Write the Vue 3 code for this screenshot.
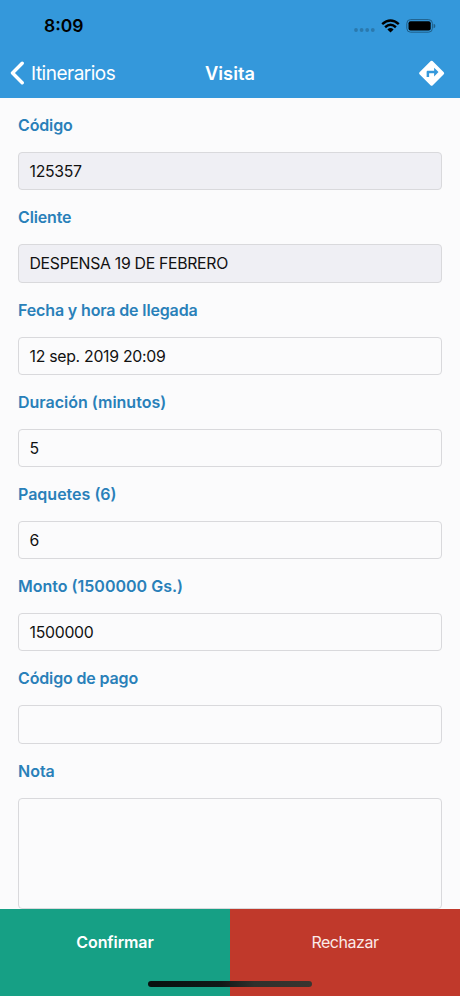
<script setup>
import { ref } from 'vue'

const fields = ref([
  { label: 'Código', value: '125357', disabled: true },
  { label: 'Cliente', value: 'DESPENSA 19 DE FEBRERO', disabled: true },
  { label: 'Fecha y hora de llegada', value: '12 sep. 2019 20:09' },
  { label: 'Duración (minutos)', value: '5', wide: true },
  { label: 'Paquetes (6)', value: '6', wide: true },
  { label: 'Monto (1500000 Gs.)', value: '1500000', wide: true },
  { label: 'Código de pago', value: '' }
])
</script>

<template>
  <div class="screen">
    <header class="header">
      <div class="status">
        <span class="time">8:09</span>
        <div class="indicators">
          <svg class="dots" width="22" height="6" viewBox="0 0 22 6">
            <circle cx="3" cy="3" r="1.9" /><circle cx="8.6" cy="3" r="1.9" />
            <circle cx="14.2" cy="3" r="1.9" /><circle cx="19.8" cy="3" r="1.9" />
          </svg>
          <svg class="wifi" width="19" height="14" viewBox="0 0 19 14">
            <path d="M1.2 5.1Q9.5-2.2 17.8 5.1M4.1 8.2Q9.5 3.4 14.9 8.2" fill="none" stroke="#000" stroke-width="2.5" />
            <path d="M6.4 10.4Q9.5 7.7 12.6 10.4L9.5 13.5Z" />
          </svg>
          <svg class="battery" width="30" height="14" viewBox="0 0 30 14">
            <rect x=".8" y=".6" width="25.6" height="12.6" rx="3.8" fill="none" stroke="#1f5f89" stroke-width="1" />
            <rect x="2.5" y="2.3" width="22.2" height="9.2" rx="2" />
            <path d="M27.6 4.7Q29.4 5.3 29.4 7T27.6 9.3Z" fill="#1f5f89" />
          </svg>
        </div>
      </div>
      <nav class="nav">
        <div class="back">
          <svg width="14" height="24" viewBox="0 0 14 24">
            <path d="M12.2 2.2L2.5 12L12.2 21.8" fill="none" stroke="#fff" stroke-width="3.4" stroke-linecap="round" stroke-linejoin="round" />
          </svg>
          <span>Itinerarios</span>
        </div>
        <h1>Visita</h1>
        <div class="action">
          <svg width="30" height="30" viewBox="0 0 24 24" fill="#fff">
            <path transform="translate(-.3 .2)" d="M21.71 11.29l-9-9a.996.996 0 0 0-1.41 0l-9 9a.996.996 0 0 0 0 1.41l9 9c.39.39 1.02.39 1.41 0l9-9a.996.996 0 0 0 0-1.41zM14 14.5V12h-4v3H8v-4c0-.55.45-1 1-1h5V7.5l3.5 3.5-3.5 3.5z" />
          </svg>
        </div>
      </nav>
    </header>
    <main class="form">
      <template v-for="f in fields" :key="f.label">
        <label class="label" :class="{ wide: f.wide }">{{ f.label }}</label>
        <div class="input" :class="{ disabled: f.disabled }">{{ f.value }}</div>
      </template>
      <label class="label wide">Nota</label>
      <div class="input note"></div>
    </main>
    <footer class="footer">
      <div class="btn confirm">Confirmar</div>
      <div class="btn reject">Rechazar</div>
      <div class="home"></div>
    </footer>
  </div>
</template>

<style>
body { background: #fbfbfc; }
</style>

<style scoped>
.screen {
  display: flex;
  flex-direction: column;
  width: 460px;
  height: 996px;
  overflow: hidden;
  background: #fbfbfc;
  font-family: Inter, sans-serif;
  color: #111;
}
.header { height: 98px; flex: none; background: #3498db; }
.status {
  display: flex;
  justify-content: space-between;
  align-items: center;
  height: 49px;
  box-sizing: border-box;
  padding: 2px 24px 0 44px;
}
.time { font-size: 17.5px; font-weight: 600; color: #000; }
.indicators { display: flex; align-items: center; }
.dots { fill: #2a79ae; margin: 8px 6px 0 0; }
.wifi { margin-right: 6px; }
.nav {
  display: grid;
  grid-template-columns: 1fr auto 1fr;
  align-items: center;
  height: 48px;
  padding: 0 10px;
  color: #fff;
}
.back { display: flex; align-items: center; gap: 7px; font-size: 19px; letter-spacing: -0.5px; }
.nav h1 { margin: 0; font-size: 18.3px; font-weight: 600; }
.action { display: flex; justify-content: flex-end; padding-right: 3.5px; }
.form { flex: 1; min-height: 0; padding: 0.3px 18px 0; overflow: hidden; }
.label {
  display: block;
  height: 53.9px;
  line-height: 54px;
  font-size: 16px;
  font-weight: 600;
  letter-spacing: -0.14px;
  color: #2980b9;
  white-space: nowrap;
}
.label.wide { letter-spacing: 0; }
.input {
  box-sizing: border-box;
  height: 38.3px;
  padding-left: 10.5px;
  border: 1px solid #d9d9dc;
  border-radius: 4px;
  line-height: 37px;
  font-size: 15.8px;
  letter-spacing: -0.27px;
  white-space: nowrap;
}
.disabled { background: #efeff4; letter-spacing: -0.3px; }
.note { height: 111.6px; }
.footer { position: relative; display: flex; flex: none; height: 87px; }
.btn {
  flex: 1;
  line-height: 67px;
  text-align: center;
  font-size: 16px;
  color: #fff;
}
.confirm { background: #16a085; font-weight: 600; letter-spacing: -0.1px; }
.reject { background: #c0392b; color: #fbeae8; letter-spacing: -0.45px; }
.home {
  position: absolute;
  left: 148px;
  bottom: 9px;
  width: 164px;
  height: 6px;
  border-radius: 3px;
  background: linear-gradient(90deg, #08110f 0%, #111918 45%, #30302c 65%, #393530 100%);
}
</style>
